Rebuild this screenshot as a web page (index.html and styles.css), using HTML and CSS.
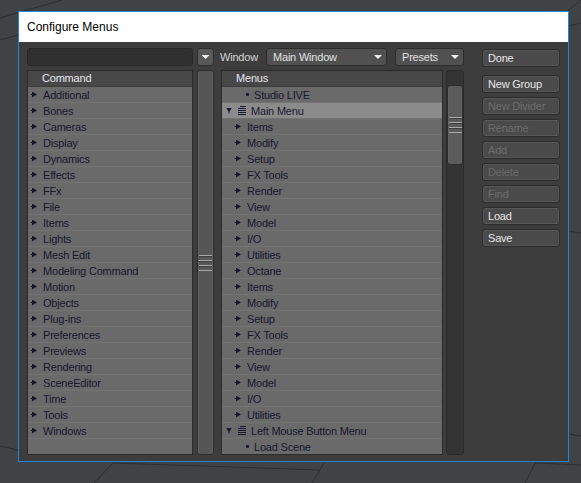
FILE: index.html
```html
<!DOCTYPE html>
<html lang="en">
<head>
    <meta charset="UTF-8">
    <meta name="viewport" content="width=device-width, initial-scale=1.0">
    <title>Configure Menus</title>
    <link rel="stylesheet" href="styles.css">
</head>
<body>
    <svg class="desk-lines" width="581" height="483" viewBox="0 0 581 483">
        <g stroke="#2b2d30" stroke-width="1" fill="none">
            <line x1="0" y1="18" x2="62" y2="0"/>
            <line x1="0" y1="40" x2="18" y2="35"/>
            <line x1="566" y1="12" x2="581" y2="0"/>
            <line x1="569" y1="26" x2="581" y2="23"/>
            <line x1="569" y1="231" x2="581" y2="233"/>
            <line x1="569" y1="434" x2="581" y2="436"/>
            <line x1="0" y1="446" x2="18" y2="450"/>
            <line x1="113" y1="463" x2="94" y2="483"/>
            <line x1="113" y1="463" x2="320" y2="470"/>
            <line x1="324" y1="463" x2="312" y2="483"/>
            <line x1="535" y1="463" x2="525" y2="483"/>
            <line x1="535" y1="463" x2="581" y2="465"/>
        </g>
    </svg>

    <div class="dialog">
        <div class="titlebar">Configure Menus</div>
        <div class="dialog-body">
            <div class="search"></div>
            <div class="icon-btn"><span class="caret"></span></div>
            <div class="window-bar">
                <span class="label">Window</span>
                <div class="dropdown main-window">Main Window<span class="caret"></span></div>
                <div class="dropdown presets">Presets<span class="caret"></span></div>
            </div>
            <div class="btn done">Done</div>

            <div class="list cmd-list">
                <div class="list-head">Command</div>
                <div class="row"><i class="arr"></i>Additional</div>
                <div class="row"><i class="arr"></i>Bones</div>
                <div class="row"><i class="arr"></i>Cameras</div>
                <div class="row"><i class="arr"></i>Display</div>
                <div class="row"><i class="arr"></i>Dynamics</div>
                <div class="row"><i class="arr"></i>Effects</div>
                <div class="row"><i class="arr"></i>FFx</div>
                <div class="row"><i class="arr"></i>File</div>
                <div class="row"><i class="arr"></i>Items</div>
                <div class="row"><i class="arr"></i>Lights</div>
                <div class="row"><i class="arr"></i>Mesh Edit</div>
                <div class="row"><i class="arr"></i>Modeling Command</div>
                <div class="row"><i class="arr"></i>Motion</div>
                <div class="row"><i class="arr"></i>Objects</div>
                <div class="row"><i class="arr"></i>Plug-ins</div>
                <div class="row"><i class="arr"></i>Preferences</div>
                <div class="row"><i class="arr"></i>Previews</div>
                <div class="row"><i class="arr"></i>Rendering</div>
                <div class="row"><i class="arr"></i>SceneEditor</div>
                <div class="row"><i class="arr"></i>Time</div>
                <div class="row"><i class="arr"></i>Tools</div>
                <div class="row"><i class="arr"></i>Windows</div>
            </div>

            <div class="scroll scroll-left">
                <div class="thumb full"><span class="grip"></span></div>
            </div>

            <div class="list menu-list">
                <div class="list-head">Menus</div>
                <div class="row item"><i class="dot"></i>Studio LIVE</div>
                <div class="row group selected"><i class="arr-down"></i><i class="menu-icon"></i>Main Menu</div>
                <div class="row sub"><i class="arr"></i>Items</div>
                <div class="row sub"><i class="arr"></i>Modify</div>
                <div class="row sub"><i class="arr"></i>Setup</div>
                <div class="row sub"><i class="arr"></i>FX Tools</div>
                <div class="row sub"><i class="arr"></i>Render</div>
                <div class="row sub"><i class="arr"></i>View</div>
                <div class="row sub"><i class="arr"></i>Model</div>
                <div class="row sub"><i class="arr"></i>I/O</div>
                <div class="row sub"><i class="arr"></i>Utilities</div>
                <div class="row sub"><i class="arr"></i>Octane</div>
                <div class="row sub"><i class="arr"></i>Items</div>
                <div class="row sub"><i class="arr"></i>Modify</div>
                <div class="row sub"><i class="arr"></i>Setup</div>
                <div class="row sub"><i class="arr"></i>FX Tools</div>
                <div class="row sub"><i class="arr"></i>Render</div>
                <div class="row sub"><i class="arr"></i>View</div>
                <div class="row sub"><i class="arr"></i>Model</div>
                <div class="row sub"><i class="arr"></i>I/O</div>
                <div class="row sub"><i class="arr"></i>Utilities</div>
                <div class="row group"><i class="arr-down"></i><i class="menu-icon"></i>Left Mouse Button Menu</div>
                <div class="row item"><i class="dot"></i>Load Scene</div>
            </div>

            <div class="scroll scroll-right">
                <div class="thumb part"><span class="grip"></span></div>
            </div>

            <div class="actions">
                <div class="btn">New Group</div>
                <div class="btn disabled">New Divider</div>
                <div class="btn disabled">Rename</div>
                <div class="btn disabled">Add</div>
                <div class="btn disabled">Delete</div>
                <div class="btn disabled">Find</div>
                <div class="btn">Load</div>
                <div class="btn">Save</div>
            </div>
        </div>
    </div>
</body>
</html>
```

FILE: styles.css
```css
body {
    margin: 0;
    width: 581px;
    height: 483px;
    overflow: hidden;
    background: #404346;
    font-family: 'Liberation Sans', Arial, sans-serif;
    position: relative;
}
.desk-lines {
    position: absolute;
    left: 0;
    top: 0;
}
.dialog {
    position: relative;
    margin: 11px 0 0 18px;
    width: 549px;
    border: 1px solid #1f86da;
}
.titlebar {
    height: 30px;
    line-height: 30px;
    background: #FFFFFF;
    color: #000000;
    font-size: 12px;
    padding-left: 8px;
}
.dialog-body {
    display: grid;
    grid-template-columns: 166px 4px 17px 7px 222px 3px 18px 18px 78px;
    grid-template-rows: 18px 385px;
    row-gap: 4px;
    padding: 6px 8px;
    background: #3d3d3d;
    font-size: 11px;
    letter-spacing: -0.2px;
}

/* top bar */
.search {
    grid-column: 1;
    background: #303030;
    border: 1px solid #272727;
    border-radius: 3px;
}
.icon-btn {
    grid-column: 3;
    background: #595959;
    border: 1px solid #2e2e2e;
    border-radius: 3px;
    display: flex;
    justify-content: center;
    align-items: center;
}
.caret {
    width: 8px;
    height: 4px;
    background: #EEEEEE;
    clip-path: polygon(0 0, 100% 0, 50% 100%);
}
.window-bar {
    grid-column: 5 / 8;
    display: flex;
    align-items: center;
    margin-left: -1px;
}
.window-bar .label {
    flex: 1;
    color: #d4d4d4;
}
.dropdown {
    height: 16px;
    line-height: 16px;
    background: #515151;
    border: 1px solid #2c2c2c;
    border-radius: 3px;
    color: #e2e2e2;
    padding: 0 4px 0 6px;
    display: flex;
    align-items: center;
    justify-content: space-between;
}
.main-window {
    width: 109px;
}
.presets {
    width: 57px;
    margin-left: 8px;
}

/* buttons */
.btn {
    height: 16px;
    line-height: 16px;
    background: #4a4a4a;
    border: 1px solid #2c2c2c;
    box-shadow: inset 0 0 0 1px #575757;
    border-radius: 3px;
    color: #e8e8e8;
    padding-left: 5px;
}
.btn.disabled {
    color: #6c6c6c;
}
.done {
    grid-column: 9;
    margin-top: 1px;
}
.actions {
    grid-column: 9;
    padding-top: 5px;
    display: flex;
    flex-direction: column;
    gap: 4px;
}

/* lists */
.list {
    background: #6a6a6a;
    border: 1px solid #2b2b2b;
    overflow: hidden;
    color: #17172f;
}
.cmd-list {
    grid-column: 1;
}
.menu-list {
    grid-column: 5;
}
.list-head {
    height: 15px;
    line-height: 15px;
    background: #474747;
    border-bottom: 1px solid #3c3c3c;
    color: #e6e6ec;
    padding-left: 14px;
}
.row {
    height: 15px;
    border-bottom: 1px solid #737373;
    display: flex;
    align-items: center;
    padding-left: 3px;
}
.row.selected {
    background: #8b8b8b;
}
.arr {
    width: 6px;
    height: 6px;
    margin-right: 6px;
    background: #17172f;
    clip-path: polygon(0 2.5px, 1px 2.5px, 1px 0, 6px 3px, 1px 6px, 1px 3.5px, 0 3.5px);
}
.row.sub {
    padding-left: 13px;
}
.row.item {
    padding-left: 24px;
}
.dot {
    width: 3px;
    height: 3px;
    background: #17172f;
    border-radius: 1px;
    margin-right: 5px;
}
.row.group {
    padding-left: 4px;
}
.arr-down {
    width: 6px;
    height: 6px;
    background: #17172f;
    clip-path: polygon(0 0, 6px 0, 3.5px 4px, 3.5px 6px, 2.5px 6px, 2.5px 4px);
    margin-right: 6px;
}
.menu-icon {
    width: 8px;
    height: 9px;
    margin-right: 5px;
    background: repeating-linear-gradient(#17172f 0 1px, transparent 1px 2px);
    clip-path: polygon(2px 0, 8px 0, 8px 9px, 0 9px, 0 2px, 2px 2px);
}

/* scroll bars */
.scroll {
    border-radius: 3px;
    position: relative;
}
.scroll-left {
    grid-column: 3;
}
.scroll-right {
    grid-column: 7;
    background: #343434;
    border: 1px solid #2a2a2a;
}
.thumb {
    background: #565656;
    border: 1px solid #2d2d2d;
    box-shadow: inset 1px 0 #626262, inset -1px 0 #626262;
    border-radius: 3px;
    display: flex;
    justify-content: center;
    align-items: center;
    box-sizing: border-box;
}
.thumb.full {
    height: 100%;
}
.thumb.part {
    margin-top: 14px;
    height: 80px;
    background: #5b5b5b;
}
.grip {
    width: 13px;
    height: 16px;
    background: repeating-linear-gradient(#a9a9a9 0 1px, #3e3e3e 1px 2px, transparent 2px 5px);
}
```
